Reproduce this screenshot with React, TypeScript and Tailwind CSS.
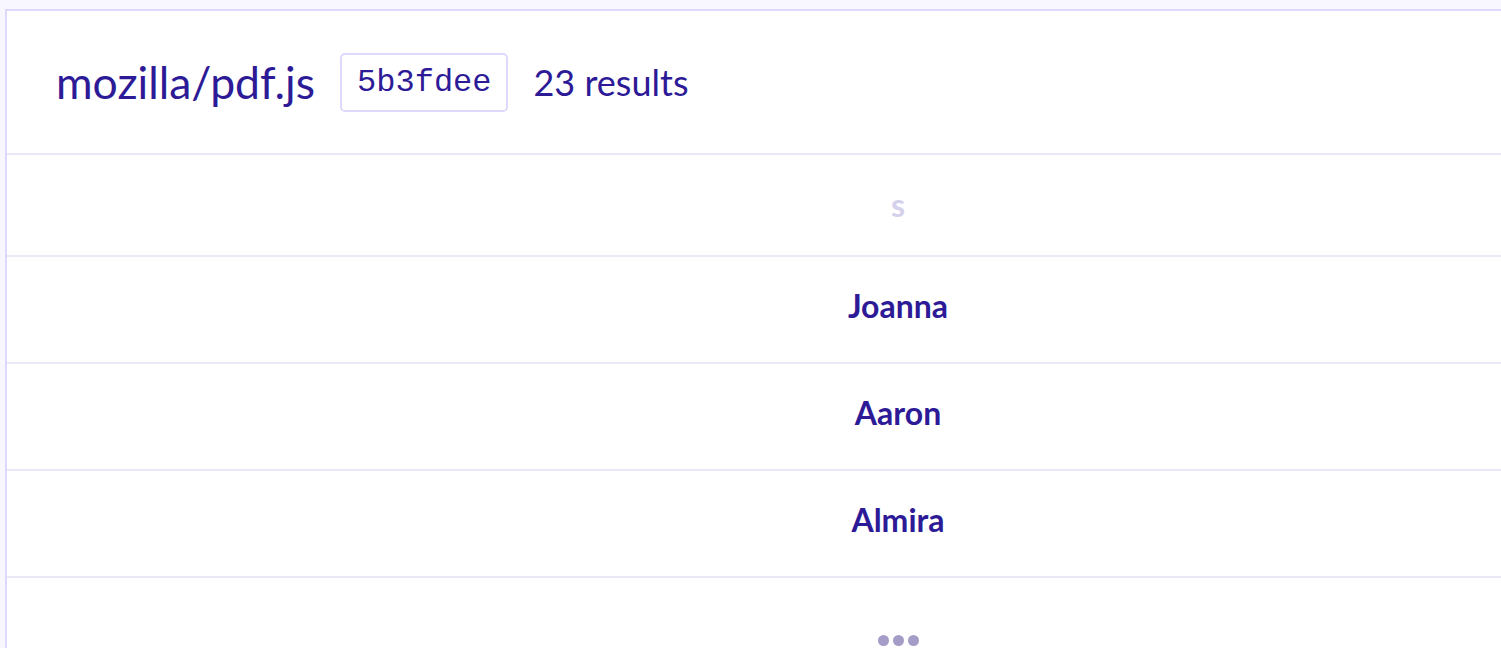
const names = ["Joanna", "Aaron", "Almira"];

export default function App() {
  return (
    <div className="h-[648px] w-[1501px] overflow-hidden bg-[#f8f7ff] pl-[5px] pt-[9px] font-['Lato','Noto_Sans',sans-serif]">
      <div className="w-[1786px] border-2 border-[#ddd9fb] bg-white">
        {/* Header */}
        <div className="flex h-[144px] items-center border-b-2 border-[#ebe8f7] pl-[49px]">
          <h1 className="text-[44.5px] leading-none text-[#2d1a97]">mozilla/pdf.js</h1>
          <span className="ml-[25px] rounded-[5px] border-2 border-[#ddd9fb] px-[15px] py-[10px] font-['Liberation_Mono',monospace] text-[32px] leading-[35px] text-[#2d1a97]">
            5b3fdee
          </span>
          <span className="ml-[25px] text-[36px] leading-none text-[#2d1a97]">23 results</span>
        </div>

        {/* Column header */}
        <div className="flex h-[102px] items-center justify-center border-b-2 border-[#ebe8f7]">
          <span className="text-[32px] font-bold text-[#d5d1ec]">s</span>
        </div>

        {names.map((n) => (
          <div
            key={n}
            className="flex h-[107px] items-center justify-center border-b-2 border-[#ebe8f7] pb-[7px]"
          >
            <span className="text-[32px] font-bold text-[#2d1a97]">{n}</span>
          </div>
        ))}

        {/* More */}
        <div className="flex h-[107px] justify-center pt-[57px]">
          <div className="flex gap-[4px]">
            <span className="h-[11px] w-[11px] rounded-full bg-[#a59cc8]" />
            <span className="h-[11px] w-[11px] rounded-full bg-[#a59cc8]" />
            <span className="h-[11px] w-[11px] rounded-full bg-[#a59cc8]" />
          </div>
        </div>
      </div>
    </div>
  );
}
